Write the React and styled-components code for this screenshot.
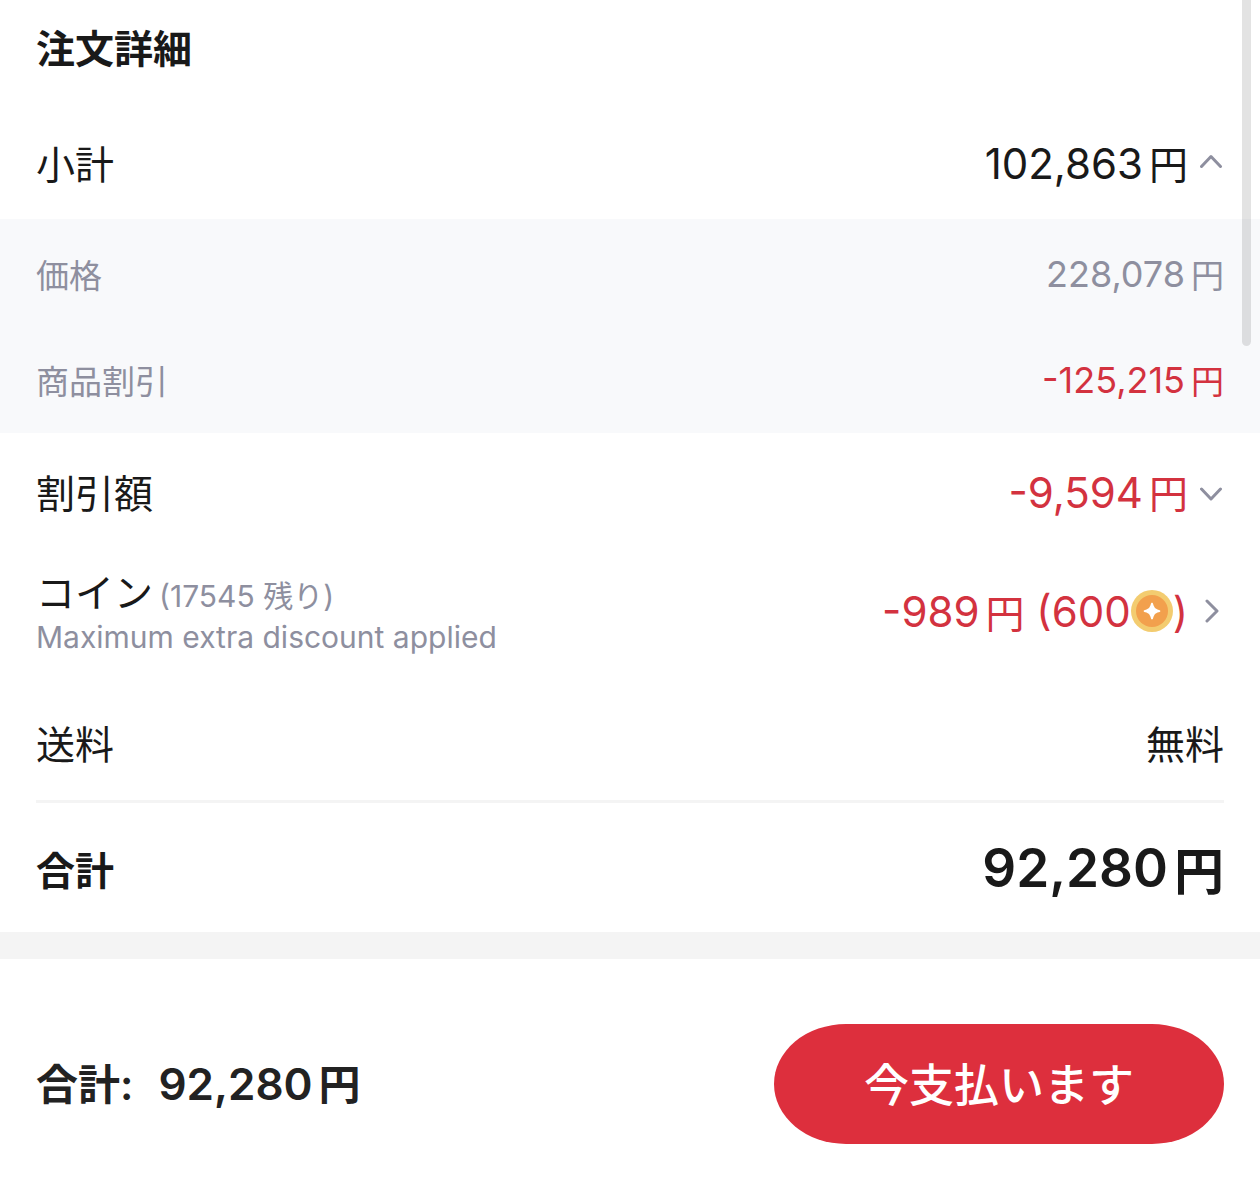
import React, { useState } from "react";
import styled, { createGlobalStyle } from "styled-components";

const GlobalStyle = createGlobalStyle`
  * {
    box-sizing: border-box;
  }
  body {
    margin: 0;
    background: #fff;
    color: #191919;
    font-family: Inter, "Noto Sans CJK JP", sans-serif;
  }
`;

// Layout

const Page = styled.main`
  position: relative;
  min-height: 100vh;
  display: flex;
  flex-direction: column;
`;

const ScrollThumb = styled.div`
  position: absolute;
  top: 0;
  right: 9px;
  width: 9px;
  height: 346px;
  border-radius: 0 0 5px 5px;
  background: rgba(0, 0, 0, 0.11);
`;

const Title = styled.h1`
  margin: 0;
  padding: 0 36px 6px;
  font-size: 39px;
  line-height: 98px;
  font-weight: 700;
`;

const Row = styled.div`
  display: flex;
  align-items: center;
  justify-content: space-between;
  min-height: ${props => props.$height || 116}px;
  padding: 0 36px;
`;

const ShippingRow = styled(Row)`
  margin-top: 11px;
`;

const SubRows = styled.section`
  padding-top: 2px;
  background: #f8f9fb;
`;

const Label = styled.span`
  font-size: ${props => (props.$small ? 33 : 39)}px;
  font-weight: ${props => (props.$bold ? 700 : 400)};
  color: ${props => (props.$small ? "#8e8f9f" : "#191919")};
`;

const Value = styled.span`
  display: flex;
  align-items: center;
  font-size: ${props => props.$size || 42}px;
  font-weight: ${props => props.$weight || 400};
  color: ${props => props.$color || "#191919"};
`;

const Toggle = styled.button`
  display: flex;
  align-items: center;
  gap: 12px;
  padding: 0;
  border: 0;
  background: none;
  font: inherit;
  color: inherit;
  cursor: pointer;
`;

const Yen = styled.span`
  margin-left: 6px;
  font-size: ${props => props.$size || 39}px;
`;

const CoinLabel = styled.div`
  display: flex;
  flex-direction: column;
  padding-top: 8px;
  line-height: 41px;
`;

const CoinName = styled(Label)`
  display: flex;
  align-items: baseline;
  gap: 6px;
`;

const Note = styled.span`
  font-size: 30px;
  color: #8e8f9f;
`;

const Divider = styled.hr`
  width: calc(100% - 72px);
  height: 3px;
  margin: 0 36px;
  border: 0;
  background: #f4f4f4;
`;

const PayBar = styled.footer`
  display: flex;
  align-items: center;
  justify-content: space-between;
  padding: 65px 36px 36px;
  border-top: 27px solid #f4f4f4;
`;

const PayTotal = styled.div`
  display: flex;
  align-items: baseline;
  gap: 25px;
  font-size: 44px;
  line-height: 54px;
  font-weight: 600;
  color: #222;
`;

const PayLabel = styled.span`
  font-size: 42px;
`;

const PayButton = styled.button`
  width: 450px;
  height: 120px;
  padding: 0 0 4px;
  border: 0;
  border-radius: 72px / 60px;
  background: #dd2f3d;
  color: #fff;
  font: inherit;
  font-size: 45px;
  font-weight: 500;
  cursor: pointer;
`;

// Icons

const Chevron = ({ d }) => (
  <svg width="24" height="24" viewBox="0 0 24 24" fill="none" aria-hidden="true">
    <path d={d} stroke="#8e8f9f" strokeWidth="3" strokeLinecap="round" strokeLinejoin="round" />
  </svg>
);

const CoinIcon = () => (
  <svg width="42" height="42" viewBox="0 0 42 42" aria-hidden="true">
    <circle cx="21" cy="21" r="21" fill="#f3cc70" />
    <circle cx="21" cy="21" r="16" fill="#f2a04d" />
    <path
      d="M21 12.5Q22 12.5 22.6 15.5Q23.4 18.6 26.5 19.4Q29.5 20 29.5 21Q29.5 22 26.5 22.6Q23.4 23.4 22.6 26.5Q22 29.5 21 29.5Q20 29.5 19.4 26.5Q18.6 23.4 15.5 22.6Q12.5 22 12.5 21Q12.5 20 15.5 19.4Q18.6 18.6 19.4 15.5Q20 12.5 21 12.5Z"
      fill="#fff"
    />
  </svg>
);

const UP = "M1.5 16.5L11 6.5L20.5 16.5";
const DOWN = "M1.5 10L11 20L20.5 10";
const RIGHT = "M7 2L17 12L7 22";

function App() {
  const [open, setOpen] = useState(true);
  const [discountOpen, setDiscountOpen] = useState(false);

  return (
    <Page>
      <GlobalStyle />
      <ScrollThumb />
      <Title>注文詳細</Title>
      <Row $height={115}>
        <Label>小計</Label>
        <Value>
          <Toggle aria-expanded={open} onClick={() => setOpen(!open)}>
            <span>
              102,863<Yen>円</Yen>
            </span>
            <Chevron d={open ? UP : DOWN} />
          </Toggle>
        </Value>
      </Row>
      {open && (
        <SubRows>
          <Row $height={106}>
            <Label $small>価格</Label>
            <Value $size={36} $color="#8e8f9f">
              228,078<Yen $size={33}>円</Yen>
            </Value>
          </Row>
          <Row $height={106}>
            <Label $small>商品割引</Label>
            <Value $size={36} $color="#d3323f">
              -125,215<Yen $size={33}>円</Yen>
            </Value>
          </Row>
        </SubRows>
      )}
      <Row>
        <Label>割引額</Label>
        <Value $color="#d3323f">
          <Toggle aria-expanded={discountOpen} onClick={() => setDiscountOpen(!discountOpen)}>
            <span>
              -9,594<Yen>円</Yen>
            </span>
            <Chevron d={discountOpen ? UP : DOWN} />
          </Toggle>
        </Value>
      </Row>
      <Row $height={124}>
        <CoinLabel>
          <CoinName>
            コイン<Note>(17545 残り)</Note>
          </CoinName>
          <Note>Maximum extra discount applied</Note>
        </CoinLabel>
        <Value $color="#d3323f">
          <Toggle>
            <Value $color="#d3323f">
              -989<Yen>円</Yen>&nbsp;(600
              <CoinIcon />)
            </Value>
            <Chevron d={RIGHT} />
          </Toggle>
        </Value>
      </Row>
      <ShippingRow>
        <Label>送料</Label>
        <Value $size={39}>無料</Value>
      </ShippingRow>
      <Divider />
      <Row $height={129}>
        <Label $bold>合計</Label>
        <Value $size={53} $weight={600}>
          92,280<Yen $size={50}>円</Yen>
        </Value>
      </Row>
      <PayBar>
        <PayTotal>
          <PayLabel>合計:</PayLabel>
          <span>
            92,280<Yen $size={42}>円</Yen>
          </span>
        </PayTotal>
        <PayButton>今支払います</PayButton>
      </PayBar>
    </Page>
  );
}

export default App;
